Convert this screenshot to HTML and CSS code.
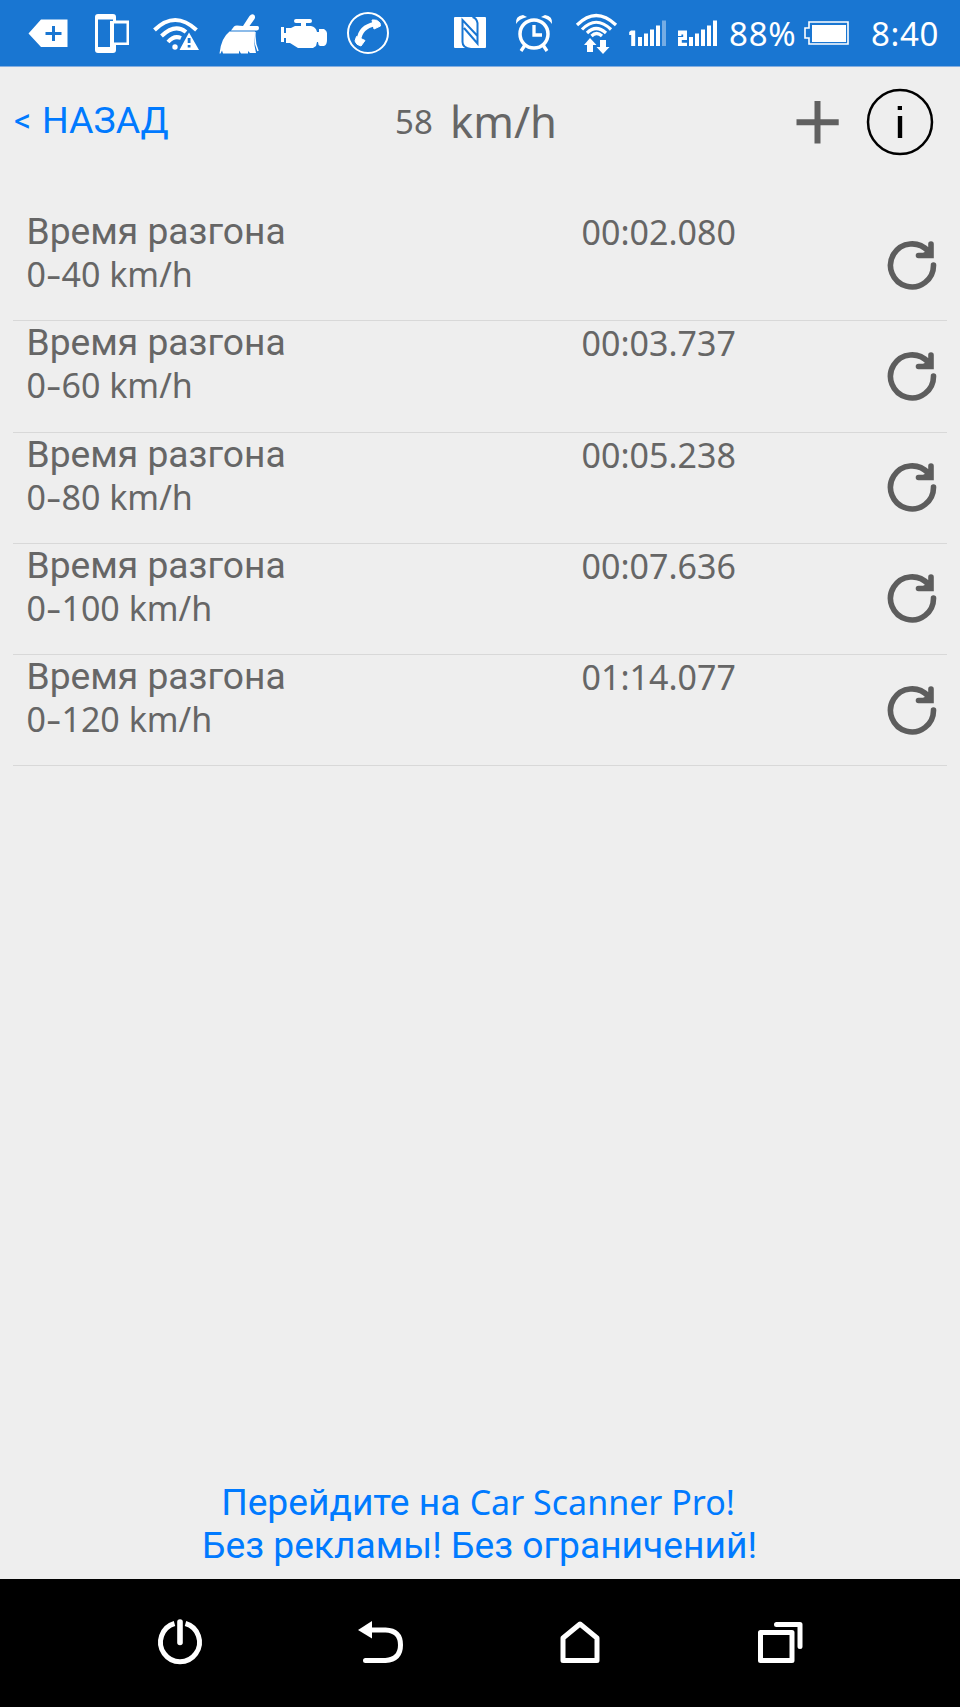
FILE: index.html
```html
<!DOCTYPE html>
<html lang="ru">
<head>
<meta charset="utf-8">
<title>Car Scanner</title>
<link rel="stylesheet" href="styles.css">
</head>
<body>
<svg class="defs" width="0" height="0">
  <symbol id="reload" viewBox="0 0 50 50">
    <path d="M46.500 24A21.500 21.500 0 1 1 41 10M44 3V14.500H31.500" fill="none" stroke="#5d5d5d" stroke-width="5.600" stroke-linecap="round"/>
    <path d="M36 12l10-6v11H36z" fill="#5d5d5d"/>
  </symbol>
</svg>
<header class="status">
  <svg class="status-icons" width="720" height="66" viewBox="0 0 720 66" fill="#fff">
    <path fill-rule="evenodd" d="M28.500 33.500L41 19.500H67.500V47H41zM52 26v6h-6.500v3H52v6h3v-6h6.500v-3H55v-6z"/>
    <path fill-rule="evenodd" d="M98 14h15q3 0 3 3v3.500h13V45h-13v5q0 3-3 3H98q-3 0-3-3V17q0-3 3-3zM98 19.500V47h12V21h3v-1.500zM114 23.500V42.500h12.500V23.500z"/>
    <g fill="none" stroke="#fff" stroke-width="4">
      <path d="M154.500 30Q175 10 196.500 30M161.500 36Q175 23 186 32M168 42Q174 35 181 38"/>
    </g>
    <circle cx="175" cy="47" r="2.700"/>
    <path fill-rule="evenodd" d="M189 32.500L199 50H179.500zM187.700 38v5h2.800v-5zM187.700 45v2.500h2.800V45z"/>
    <path d="M243 26l6.500-10q2-2.500 4-1.500 2.500 1.500 1 4.500l-5 7h8q1.500 0 1.500 2t-2 2.500h-26l3-4q1-1 3-1zM229.500 31.500h25.500q-2 10 1 21.500h-6l-2-2v2.500h-7l-2-3v3h-16l-1-3-1.500 3h-1Q221 38 229.500 31.500z"/>
    <path d="M255 32q-1 10 3 19" fill="none" stroke="#fff" stroke-width="1.500"/>
    <path d="M296 19h14q2 0 2 2t-2 2h-4v3h5q5 1 6 6h2v-3h5q3 2 3 4v7q0 5-3 6h-4q-2-1-2-4h-1l-1 4-3 2h-15l-8-5h-4v-5h-2v4h-3V27h3v6h2v-5h5l4-2h6v-3h-5q-2 0-2-2t2-2z"/>
    <circle cx="368" cy="33" r="20" fill="none" stroke="#fff" stroke-width="2"/>
    <path d="M359 40q1-13 16-16" fill="none" stroke="#fff" stroke-width="4.500"/>
    <path d="M356.500 36.500l8.500 4-4 5.500q-5-1-6-5zM372 20q5-1 8 3l.5 3-6.500 3z" stroke="#fff" stroke-linejoin="round"/>
    <rect x="454" y="17" width="32" height="31" rx="1"/>
    <path d="M471 49q-8.500-1-8.500-7V20l15 16M464 28l13.500 15.500V23q-1-5-5-6" fill="none" stroke="#1976d2" stroke-width="2"/>
    <g fill="none" stroke="#fff">
      <circle cx="534" cy="34" r="14" stroke-width="3.500"/>
      <path stroke-width="3.300" d="M534 25v10h8M525 45l-4 6M543 45l4 6"/>
      <path stroke-width="3.200" d="M577 25Q596 6 616 25M582 29.500Q596 15 611 29.500M587 33Q596 24 606 33M591.500 36Q596.500 31 602 36"/>
    </g>
    <path d="M516 24q-1-8 7-9l4 2q-8 2-11 7zM552 24q1-8-7-9l-4 2q8 2 11 7zM590 38l6.500 7H593v7h-6v-7h-3zM600 40h6v7h3.500l-6.500 7-6.500-7h3.500z"/>
    <path d="M631 30.500h4.200V46h-4V35h-2v-3zM638 37h4v9h-4zM644 33.500h4V46h-4zM650 29.500h4V46h-4zM656 25.500h4V46h-4z"/>
    <path opacity=".4" d="M662 20.500h4V46h-4z"/>
    <path d="M678 30.500h9v9.500h-5.200v2.700h5.200V46h-9v-9h5.200v-2.500h-1.800V36H678zM689 37h4v9h-4zM695 33.500h4V46h-4zM701 29.500h4V46h-4zM707 25.500h4V46h-4zM713 20.500h4V46h-4z"/>
  </svg>
  <span class="percent">88%</span>
  <svg class="battery" width="48" height="28" viewBox="0 0 48 28"><path d="M6 3h39v22H6v-6H2V9h4z" fill="none" stroke="#fff" stroke-width="1.600"/><path d="M9 6h34v17H9z" fill="#fff"/></svg>
  <time class="clock">8:40</time>
</header>
<nav class="toolbar">
  <a class="back"><span class="chevron">&lt;</span><span class="back-label">НАЗАД</span></a>
  <div class="speed"><span class="speed-value">58</span><span class="speed-unit">km/h</span></div>
  <svg class="tools" width="140" height="70" viewBox="0 0 140 70">
    <path d="M.5 35.200H42.700M21.500 14V56.500" stroke="#606060" stroke-width="6"/>
    <circle cx="104" cy="35" r="32" fill="none" stroke="#000" stroke-width="2.500"/>
    <path d="M101.700 19h4.300v4h-4.300z"/><path d="M104 29v22" stroke="#000" stroke-width="4.400"/>
  </svg>
</nav>
<main class="list">
  <section class="row"><div class="name"><div class="title">Время разгона</div><div class="range">0<span class="dash">-</span>40 km/h</div></div><div class="result">00:02.080</div><svg class="reload"><use href="#reload"/></svg></section>
  <section class="row"><div class="name"><div class="title">Время разгона</div><div class="range">0<span class="dash">-</span>60 km/h</div></div><div class="result">00:03.737</div><svg class="reload"><use href="#reload"/></svg></section>
  <section class="row"><div class="name"><div class="title">Время разгона</div><div class="range">0<span class="dash">-</span>80 km/h</div></div><div class="result">00:05.238</div><svg class="reload"><use href="#reload"/></svg></section>
  <section class="row"><div class="name"><div class="title">Время разгона</div><div class="range">0<span class="dash">-</span>100 km/h</div></div><div class="result">00:07.636</div><svg class="reload"><use href="#reload"/></svg></section>
  <section class="row"><div class="name"><div class="title">Время разгона</div><div class="range">0<span class="dash">-</span>120 km/h</div></div><div class="result">01:14.077</div><svg class="reload"><use href="#reload"/></svg></section>
</main>
<footer class="promo">
  <div class="promo-line">Перейдите на <span class="brand">Car Scanner Pro!</span></div>
  <div class="promo-line second">Без рекламы! Без ограничений!</div>
</footer>
<div class="navbar">
  <svg width="960" height="128" viewBox="0 0 960 128" fill="none" stroke="#fff" stroke-width="5" stroke-linecap="round" stroke-linejoin="round">
    <path stroke-linecap="butt" d="M174.500 44.500A19.500 19.500 0 1 0 185.500 44.500"/>
    <path d="M180 43v20.500" stroke-width="5.600"/>
    <path d="M365.500 81.500h20q15-1 15-15.500T385.500 51H370"/>
    <path d="M358 51l14-9v17.500z" fill="#fff" stroke="none"/>
    <path d="M563 59l17-14 17 14v22.500h-34z"/>
    <path d="M760.500 53.500H792v28h-31.500zM776.500 45.500H800v22"/>
  </svg>
</div>
</body>
</html>
```
FILE: styles.css
```css
* { box-sizing: border-box; }
body {
  margin: 0;
  width: 960px;
  height: 1707px;
  display: flex;
  flex-direction: column;
  background: #eee;
  color: #666;
  font-family: "Noto Sans", sans-serif;
  overflow: hidden;
}
.defs { display: none; }
svg { flex: none; display: block; }
.status {
  height: 67px;
  padding-bottom: 1px;
  display: flex;
  align-items: center;
  background: #1976d2;
  border-bottom: 1px solid #84aee0;
  color: #fff;
  font-size: 33px;
  line-height: 66px;
  white-space: nowrap;
}
.percent { width: 83px; margin-left: 9px; padding-top: 2px; letter-spacing: .8px; }
.battery { margin-left: -9px; }
.clock { margin-left: 20px; padding-top: 2px; letter-spacing: .6px; }
.toolbar {
  height: 143px;
  padding: 20px 24px 0 14px;
  display: flex;
  align-items: flex-start;
  line-height: 70px;
  white-space: nowrap;
}
.back { width: 381px; display: flex; color: #007aff; }
.chevron { width: 28px; font: 34px/67px Roboto, sans-serif; }
.back-label { font: 37.500px/67px Roboto, sans-serif; }
.speed { width: 401px; display: flex; }
.speed-value { width: 55px; font-size: 33px; }
.speed-unit { font-size: 43.500px; line-height: 68px; }
.list { padding: 0 13px; }
.row {
  height: 111.3px;
  padding: 0 10px 0 13.500px;
  display: flex;
  border-bottom: 1px solid #d8d8d8;
  font-size: 34px;
  white-space: nowrap;
}
.name { width: 555px; }
.title { font: 37.200px/43px Roboto, sans-serif; }
.range { line-height: 42px; }
.dash { display: inline-block; width: 15.500px; transform: scaleX(1.400); transform-origin: 0 50%; }
.result { flex: 1; line-height: 45px; }
.reload { width: 50px; height: 50px; margin-top: 30.500px; }
.promo {
  margin-top: auto;
  height: 98px;
  color: #007aff;
  text-align: center;
  font: 37.200px/43px Roboto, sans-serif;
  white-space: nowrap;
}
.promo-line { margin-left: -4px; }
.second { margin-left: -1px; }
.brand { font: 34px/1 "Noto Sans", sans-serif; }
.navbar { height: 128px; background: #000; }
```
